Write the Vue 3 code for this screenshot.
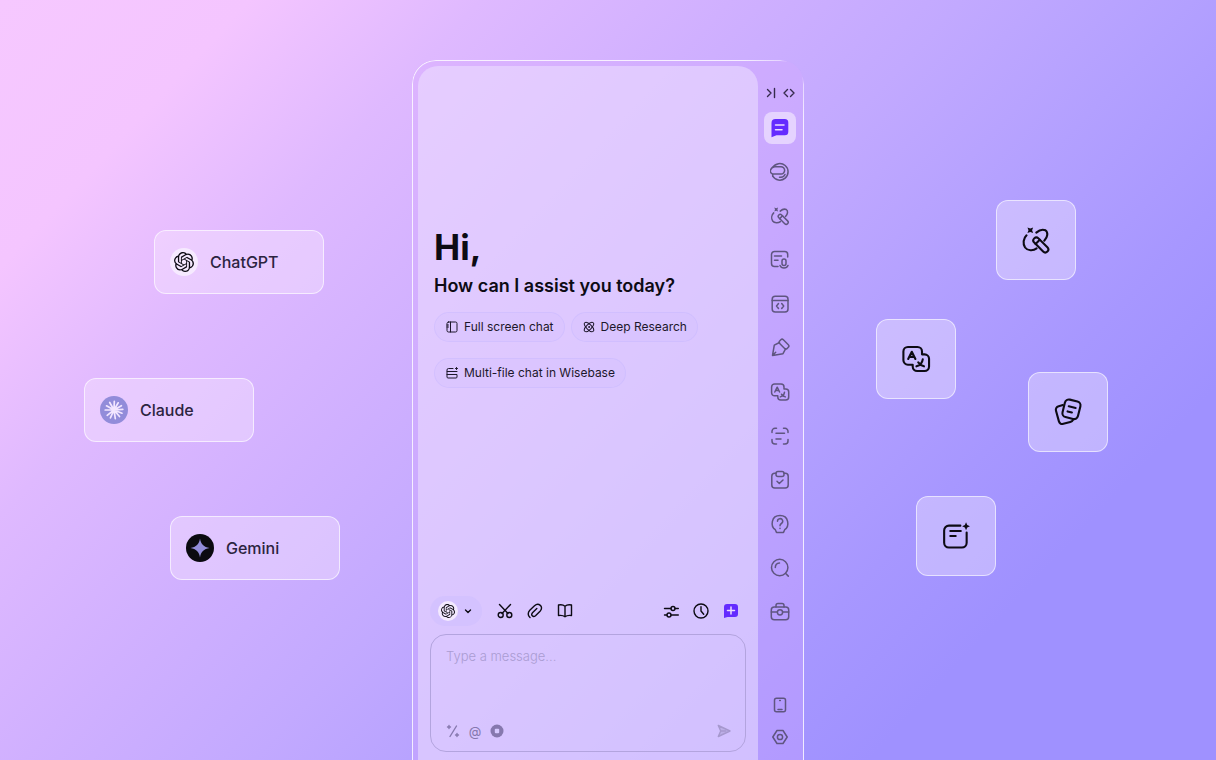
<template>
  <main class="stage">
    <section class="models" aria-label="Models">
      <article v-for="model in models" :key="model.name" class="model" :class="model.id">
        <span class="model-logo">
          <svg :viewBox="model.box" v-html="model.logo"></svg>
        </span>
        <span class="model-name">{{ model.name }}</span>
      </article>
    </section>

    <section class="sidebar">
      <div class="chat">
        <div class="hero">
          <h1>Hi,</h1>
          <h2>How can I assist you today?</h2>
          <div class="prompts">
            <button v-for="prompt in prompts" :key="prompt.text" type="button" class="prompt">
              <svg viewBox="0 0 12 12" v-html="prompt.icon"></svg>
              <span>{{ prompt.text }}</span>
            </button>
          </div>
        </div>

        <div class="toolbar">
          <button type="button" class="model-picker" aria-label="Choose model">
            <span class="picker-logo">
              <svg viewBox="0 0 24 24" v-html="openai"></svg>
            </span>
            <svg class="chevron" viewBox="0 0 8 8"><path d="M1.500 3 4 5.500 6.500 3" /></svg>
          </button>
          <button v-for="tool in leftTools" :key="tool.label" type="button" class="tool" :aria-label="tool.label">
            <svg viewBox="0 0 16 16" v-html="tool.icon"></svg>
          </button>
          <span class="spacer"></span>
          <button v-for="tool in rightTools" :key="tool.label" type="button" class="tool" :aria-label="tool.label">
            <svg viewBox="0 0 16 16" v-html="tool.icon"></svg>
          </button>
        </div>

        <form class="composer" @submit.prevent>
          <textarea v-model="message" aria-label="Message" placeholder="Type a message..."></textarea>
          <div class="composer-row">
            <button type="button" aria-label="Prompts">
              <svg viewBox="0 0 14 14">
                <path d="M10.500 2 4 12.500M3 1.500v3M1.500 3h3M11 9.500v3M9.500 11h3" />
              </svg>
            </button>
            <button type="button" class="mention" aria-label="Mention">@</button>
            <button type="button" aria-label="Record">
              <svg viewBox="0 0 14 14">
                <circle class="solid" cx="7" cy="7" r="6.500" />
                <rect class="hole" x="4.800" y="4.800" width="4.400" height="4.400" rx="1" />
              </svg>
            </button>
            <span class="spacer"></span>
            <button type="submit" aria-label="Send">
              <svg viewBox="0 0 14 14">
                <path class="send" d="M1.300 1.500 13 7 1.300 12.500 3.700 7ZM3.700 7h5" />
              </svg>
            </button>
          </div>
        </form>
      </div>

      <nav class="rail" aria-label="Tools">
        <div class="rail-top">
          <button type="button" aria-label="Collapse">
            <svg viewBox="0 0 12 12"><path d="M2.500 2.500 6 6 2.500 9.500M9.500 1.500v9" /></svg>
          </button>
          <button type="button" aria-label="Resize">
            <svg viewBox="0 0 12 12"><path d="M4.500 2.500 1 6l3.500 3.500M7.500 2.500 11 6 7.500 9.500" /></svg>
          </button>
        </div>
        <div class="rail-list">
          <button
            v-for="item in railItems"
            :key="item"
            type="button"
            class="rail-item"
            :class="{ active: item === active }"
            :aria-label="item"
            @click="active = item"
          >
            <svg viewBox="0 0 20 20" v-html="icons[item]"></svg>
          </button>
        </div>
        <div class="rail-bottom">
          <button v-for="item in ['phone', 'settings']" :key="item" type="button" class="rail-item" :aria-label="item">
            <svg viewBox="0 0 20 20" v-html="icons[item]"></svg>
          </button>
        </div>
      </nav>
    </section>

    <section class="features" aria-label="Features">
      <div v-for="(column, i) in features" :key="i" class="feature-column">
        <article v-for="name in column" :key="name" class="feature" :class="name">
          <svg viewBox="0 0 20 20" v-html="icons[name]"></svg>
        </article>
      </div>
    </section>
  </main>
</template>

<script setup>
import { ref } from "vue";

const message = ref("");
const active = ref("chat");

const openai =
  '<path class="fill" d="M22.2819 9.8211a5.9847 5.9847 0 0 0-.5157-4.9108 6.0462 6.0462 0 0 0-6.5098-2.9A6.0651 6.0651 0 0 0 4.9807 4.1818a5.9847 5.9847 0 0 0-3.9977 2.9 6.0462 6.0462 0 0 0 .7427 7.0966 5.98 5.98 0 0 0 .511 4.9107 6.051 6.051 0 0 0 6.5146 2.9001A5.9847 5.9847 0 0 0 13.2599 24a6.0557 6.0557 0 0 0 5.7718-4.2058 5.9894 5.9894 0 0 0 3.9977-2.9001 6.0557 6.0557 0 0 0-.7475-7.0729zm-9.022 12.6081a4.4755 4.4755 0 0 1-2.8764-1.0408l.1419-.0804 4.7783-2.7582a.7948.7948 0 0 0 .3927-.6813v-6.7369l2.02 1.1686a.071.071 0 0 1 .038.052v5.5826a4.504 4.504 0 0 1-4.4945 4.4944zm-9.6607-4.1254a4.4708 4.4708 0 0 1-.5346-3.0137l.142.0852 4.783 2.7582a.7712.7712 0 0 0 .7806 0l5.8428-3.3685v2.3324a.0804.0804 0 0 1-.0332.0615L9.74 19.9502a4.4992 4.4992 0 0 1-6.1408-1.6464zM2.3408 7.8956a4.485 4.485 0 0 1 2.3655-1.9728V11.6a.7664.7664 0 0 0 .3879.6765l5.8144 3.3543-2.0201 1.1685a.0757.0757 0 0 1-.071 0l-4.8303-2.7865A4.504 4.504 0 0 1 2.3408 7.872zm16.5963 3.8558L13.1038 8.364 15.1192 7.2a.0757.0757 0 0 1 .071 0l4.8303 2.7913a4.4944 4.4944 0 0 1-.6765 8.1042v-5.6772a.79.79 0 0 0-.407-.667zm2.0107-3.0231l-.142-.0852-4.7735-2.7818a.7759.7759 0 0 0-.7854 0L9.409 9.2297V6.8974a.0662.0662 0 0 1 .0284-.0615l4.8303-2.7866a4.4992 4.4992 0 0 1 6.6802 4.66zM8.3065 12.863l-2.02-1.1638a.0804.0804 0 0 1-.038-.0567V6.0742a4.4992 4.4992 0 0 1 7.3757-3.4537l-.142.0805L8.704 5.459a.7948.7948 0 0 0-.3927.6813zm1.0976-2.3654l2.602-1.4998 2.6069 1.4998v2.9994l-2.5974 1.4997-2.6067-1.4997Z"/>';

const models = [
  { id: "chatgpt", name: "ChatGPT", box: "0 0 24 24", logo: openai },
  {
    id: "claude",
    name: "Claude",
    box: "0 0 20 20",
    logo: '<path d="M10 10 10.300 1.300M10 10l4.200-7.200M10 10l7.400-4.300M10 10l8.800-.7M10 10l8 3.200M10 10l5.500 6.500M10 10l1.300 8.600M10 10l-3.600 7.800M10 10l-6.800 5.300M10 10H1.200M10 10 2.500 5.800M10 10 5.700 2.500"/>',
  },
  {
    id: "gemini",
    name: "Gemini",
    box: "0 0 20 20",
    logo: '<path class="fill" d="M10 .5c.8 5.600 3.900 8.700 9.500 9.500-5.600.8-8.700 3.900-9.500 9.500C9.200 13.900 6.100 10.800.5 10 6.100 9.200 9.200 6.100 10 .5Z"/>',
  },
];

const prompts = [
  {
    text: "Full screen chat",
    icon: '<rect x="1" y="1" width="10" height="10" rx="1.500"/><path d="M4.500 1v10M1 4h1.500M1 6h1.500"/>',
  },
  {
    text: "Deep Research",
    icon: '<ellipse cx="6" cy="6" rx="6" ry="2.600" transform="rotate(45 6 6)"/><ellipse cx="6" cy="6" rx="6" ry="2.600" transform="rotate(-45 6 6)"/><circle cx="6" cy="6" r=".5"/>',
  },
  {
    text: "Multi-file chat in Wisebase",
    icon: '<path d="M7 1.500H2.500A1.500 1.500 0 0 0 1 3v1.500h10M10.500.5v2M9.500 1.500h2M1 7.500h10V10a1 1 0 0 1-1 1H2a1 1 0 0 1-1-1V4.500"/>',
  },
];

const leftTools = [
  {
    label: "Screenshot",
    icon: '<path d="M2.500 1.500 11 10.500M13.500 1.500 5 10.500"/><circle cx="3.700" cy="12" r="2.500"/><circle cx="12.300" cy="12" r="2.500"/>',
  },
  {
    label: "Attach",
    icon: '<path d="M3 14.500C.5 12.500.8 9.500 2.800 7.300L7.500 2.800C11.500-.8 17 3.500 13.300 7.900L8.500 12.700C6 14.800 3.500 12 5.500 9.700L9.800 5.500"/>',
  },
  {
    label: "Library",
    icon: '<path d="M8 3.200C6.500 1.900 4 1.500 1.500 2v10.500c2.500-.4 5 0 6.500 1.300 1.500-1.300 4-1.700 6.500-1.300V2C12 1.500 9.500 1.900 8 3.200ZM8 3.200v10.600"/>',
  },
];

const rightTools = [
  {
    label: "Options",
    icon: '<path d="M1.500 5.500h6.500M12 5.500h3.300M1.500 12h2.500M8 12h7.300"/><circle cx="10" cy="5.500" r="2"/><circle cx="6" cy="12" r="2"/>',
  },
  { label: "History", icon: '<circle cx="8" cy="8" r="7"/><path d="M8 3.800V8l2.700 3.200"/>' },
  {
    label: "New chat",
    icon: '<path class="accent" d="M4 1h8a3 3 0 0 1 3 3v7a3 3 0 0 1-3 3H4.500L1 15V4a3 3 0 0 1 3-3Z"/><path class="cut" d="M8 4v7M4.500 7.500h7"/>',
  },
];

const icons = {
  chat: '<path class="accent" d="M5.500 1h9.300A3.500 3.500 0 0 1 18.300 4.500v9.300a3.500 3.500 0 0 1-3.500 3.500H6.500L1.500 19.200V5A4 4 0 0 1 5.500 1Z"/><path class="cut" d="M5.500 7h8.500M5.500 11.800h6.500"/>',
  brain:
    '<path d="M2.700 5.500A8.300 8.300 0 1 1 2.700 14.200"/><path d="M2.700 12A3 3 0 0 1 1 7.200C1.600 5.500 3 4.700 5 4.700h6a3.600 3.600 0 1 1 0 7.300H2.700v2.200"/><path d="M9.500 15.200h1.500a4.500 4.500 0 0 0 4-2.700"/>',
  tools:
    '<path class="fill" d="M4.300 1.600 6.200 2.300 8.100 1.600 7.400 3.500 8.100 5.400 6.200 4.700 4.300 5.400 5 3.500Z"/><path d="M3.700 6.900C1.500 9 1.100 12.500 2.700 15c1.700 2.300 5.500 2.400 7.700.6M10.200 5.100c2-1.800 4.400-2.300 6.100-1.600 1.900 1.400 1.600 4.600-.8 7"/><rect x="7" y="11.300" width="12.400" height="4" rx="2" transform="rotate(45 13.200 13.300)"/><path d="M12.500 9.800 9.700 12.600"/>',
  voice:
    '<path d="M17.700 7V4.500a3 3 0 0 0-3-3H4.500a3 3 0 0 0-3 3v9a3 3 0 0 0 3 3H8M4.500 6h7M4.500 10.200h3.500"/><rect x="12" y="9" width="4" height="6.500" rx="2"/><path d="M10 15.500c1.300 3.300 6.700 3.300 8 0"/>',
  window:
    '<rect x="2.200" y="2.200" width="15.800" height="15.800" rx="3"/><path d="M2.200 6.500H18M8.500 9.500 6.500 12l2 2.500M11.700 9.500l2 2.500-2 2.500"/>',
  pen: '<path d="M9.500 4.500 4.300 7.200 2.500 17.500 13 15.700 15.700 10.700M2.700 17.300l3-3"/><rect x="8.700" y="3.500" width="10.600" height="5.200" rx="1.800" transform="rotate(45 14 6.100)"/>',
  translate:
    '<path d="M4.600 2H11a3 3 0 0 1 3 3v1.900h1.700a3 3 0 0 1 3 3V15a3 3 0 0 1-3 3h-4.900a3 3 0 0 1-3-3v-1.200H4.600a3 3 0 0 1-3-3V5a3 3 0 0 1 3-3Z"/><path d="M4.800 10 7.200 5.200 9.600 10M5.700 8.600h3M14.500 10.200c-.3 2.300-1.700 4-4.200 4.700M11.500 12.200c1 1.300 2 2.200 3.800 2.700"/>',
  scan: '<path d="M2 6.500V5.300a3 3 0 0 1 3-3h1.500M13.500 2.300H15a3 3 0 0 1 3 3v1.200M18 13.500V15a3 3 0 0 1-3 3h-1.500M6.500 18H5a3 3 0 0 1-3-3v-1.500M6 7.300h8.500M6 13h5"/>',
  tasks:
    '<path d="M6 3.300H4.800a3 3 0 0 0-3 3V15a3 3 0 0 0 3 3h10.400a3 3 0 0 0 3-3V6.300a3 3 0 0 0-3-3H14"/><rect x="6" y="1.500" width="8" height="5" rx="2"/><path d="m7 11.300 2.300 2.200 3.700-3.500"/>',
  help: '<path d="M6.500 18.400 5.300 15.700C.3 12.200 1 1.500 10 1.500s9.700 10.700 4.700 14.200l-1.200 2.700Z"/><path d="M7.500 7.300a2.600 2.600 0 1 1 3.900 2.200C10.300 10.200 10 10.700 10 11.800M10 14.300v.3"/>',
  search: '<circle cx="9.700" cy="9.500" r="8.200"/><path d="m15.700 15.500 2.600 2.600M5.300 9.500A4.600 4.600 0 0 1 9.500 5"/>',
  toolbox:
    '<rect x="1.300" y="5" width="17.400" height="12.700" rx="3"/><path d="M6 5V3.500a2 2 0 0 1 2-2h4a2 2 0 0 1 2 2V5M1.300 10h6M12.700 10h6"/><circle cx="10" cy="10.300" r="2.600"/>',
  phone: '<rect x="4.500" y="3.300" width="11" height="13.400" rx="2"/><path d="M8 14.500h4M9.700 5.500h.6"/>',
  settings: '<path d="M7 3.500h6L17.200 10 13 16.500H7L2.800 10Z"/><circle cx="10" cy="10" r="2.600"/>',
  cards:
    '<rect x="7" y="2.200" width="10.600" height="12" rx="2.700" transform="rotate(14 12.300 8.200)"/><path d="M6.600 5.400 3.800 6.200c-1.500.4-2.200 1.500-1.800 3l1.900 6.900c.4 1.500 1.500 2.200 3 1.800l4.600-1.300c1.200-.3 1.700-.8 2.100-1.700M10.500 6.200l4.600 1.100M9.700 9.600l2.900.7"/>',
  note: '<path d="M12.900 3.100H5.300a3.200 3.200 0 0 0-3.200 3.200v8.200a3.200 3.200 0 0 0 3.200 3.200h8.600a3.200 3.200 0 0 0 3.200-3.200V7.700M6.200 6.700h7M6.200 10h3.600"/><path class="fill" d="m16.700.9.800 1.800 1.800.8-1.800.8-.8 1.800-.8-1.800-1.800-.8 1.800-.8Z"/>',
};

const railItems = [
  "chat",
  "brain",
  "tools",
  "voice",
  "window",
  "pen",
  "translate",
  "scan",
  "tasks",
  "help",
  "search",
  "toolbox",
];

const features = [
  ["translate", "note"],
  ["tools", "cards"],
];
</script>

<style>
body {
  margin: 0;
}
</style>

<style scoped>
.stage {
  display: grid;
  grid-template-columns: 1fr 392px 1fr;
  min-height: 100vh;
  overflow: hidden;
  background: linear-gradient(133deg, #f6c8ff 0%, #f4c5ff 13%, #dfb9ff 25%, #d0b0ff 38%, #c2a9ff 50%, #b3a0ff 62%, #a797ff 73%, #9f91ff 82%, #9f91ff 100%);
  font-family: "Inter", "Open Sans", sans-serif;
  color: #0d0b14;
}

button {
  display: flex;
  align-items: center;
  justify-content: center;
  margin: 0;
  padding: 0;
  border: 0;
  background: none;
  color: inherit;
  font: inherit;
  cursor: pointer;
}

svg {
  display: block;
  flex: none;
  fill: none;
  stroke: currentColor;
  stroke-width: 1.4;
  stroke-linecap: round;
  stroke-linejoin: round;
}

svg :deep(.fill) {
  fill: currentColor;
  stroke: none;
}

svg :deep(.accent) {
  fill: #642bff;
  stroke: none;
}

svg :deep(.cut) {
  stroke: #eadcff;
  stroke-width: 1.5;
}

.spacer {
  flex: 1;
}

/* model cards */
.models {
  display: flex;
  flex-direction: column;
  align-items: flex-end;
  padding-top: 230px;
}

.model {
  display: flex;
  align-items: center;
  gap: 12px;
  box-sizing: border-box;
  width: 170px;
  height: 64px;
  padding: 0 15px;
  border: 1px solid rgba(255, 255, 255, 0.65);
  border-radius: 12px;
  background: rgba(250, 235, 255, 0.38);
}

.chatgpt {
  margin: 0 88px 84px 0;
}

.claude {
  margin: 0 158px 74px 0;
}

.gemini {
  margin-right: 72px;
}

.model-logo {
  display: flex;
  align-items: center;
  justify-content: center;
  width: 28px;
  height: 28px;
  border-radius: 50%;
  background: #f6eaff;
}

.model-logo svg {
  width: 20px;
  height: 20px;
}

.claude .model-logo {
  background: #928cda;
  color: #f3e6ff;
}

.claude .model-logo svg {
  stroke-width: 1.7;
}

.gemini .model-logo {
  background: #0b0a10;
  color: #928cda;
}

.model-name {
  font-size: 16px;
  font-weight: 500;
  line-height: 24px;
  color: #2c2440;
}

/* side panel */
.sidebar {
  position: relative;
  display: flex;
  margin-top: 60px;
  padding: 6px 0 0 6px;
  border-radius: 24px 24px 0 0;
  background: rgba(215, 170, 255, 0.3);
}

.sidebar::before {
  content: "";
  position: absolute;
  inset: 0;
  padding: 1px 1px 0;
  border-radius: 24px 24px 0 0;
  background: radial-gradient(circle at 100% 0, transparent 16px, rgba(255, 255, 255, 0.5) 24px, rgba(255, 255, 255, 0.8) 60px);
  mask: linear-gradient(#000 0 0) content-box exclude, linear-gradient(#000 0 0);
  pointer-events: none;
}

.chat {
  display: flex;
  flex: 1;
  flex-direction: column;
  padding: 0 12px 8px;
  border-radius: 20px 20px 0 0;
  background: rgba(240, 230, 255, 0.5);
}

.hero {
  flex: 1;
  padding: 160px 4px 16px;
}

h1 {
  margin: 0;
  font-size: 35px;
  font-weight: 700;
  line-height: 43px;
}

h2 {
  margin: 5px 0 0;
  font-size: 18px;
  font-weight: 600;
  line-height: 24px;
}

.prompts {
  display: flex;
  flex-wrap: wrap;
  gap: 16px 6px;
  margin-top: 14px;
}

.prompt {
  gap: 6px;
  height: 30px;
  padding: 0 10px 0 11px;
  border: 1px solid rgba(190, 175, 255, 0.3);
  border-radius: 15px;
  background: rgba(195, 180, 255, 0.12);
  box-sizing: border-box;
  font-size: 12px;
  line-height: 16px;
  color: #1d172b;
}

.prompt svg {
  width: 12px;
  height: 12px;
  stroke-width: 1;
}

.toolbar {
  display: flex;
  align-items: center;
  gap: 14px;
  height: 30px;
  padding-right: 7px;
  margin-bottom: 8px;
}

.model-picker {
  gap: 6px;
  width: 52px;
  height: 30px;
  margin-right: 1px;
  padding-right: 2px;
  box-sizing: border-box;
  border-radius: 15px;
  background: rgba(200, 185, 255, 0.35);
}

.picker-logo {
  display: flex;
  align-items: center;
  justify-content: center;
  width: 20px;
  height: 20px;
  border-radius: 50%;
  background: #f3e9ff;
}

.picker-logo svg {
  width: 14px;
  height: 14px;
}

.chevron {
  width: 8px;
  height: 8px;
}

.tool svg {
  width: 16px;
  height: 16px;
}

.composer {
  display: flex;
  flex-direction: column;
  height: 118px;
  box-sizing: border-box;
  padding: 11px 14px 12px 15px;
  border: 1px solid #b3a4de;
  border-radius: 16px;
}

.composer textarea {
  flex: 1;
  min-height: 0;
  padding: 0;
  border: 0;
  outline: 0;
  resize: none;
  background: none;
  color: inherit;
  font-family: inherit;
  font-size: 13px;
  font-weight: 300;
  line-height: 20px;
}

.composer textarea::placeholder {
  color: #aa9cd2;
  opacity: 1;
}

.composer-row {
  display: flex;
  align-items: center;
  gap: 8px;
  height: 16px;
  color: #8678ae;
}

.composer-row svg {
  width: 14px;
  height: 14px;
}

.mention {
  width: 14px;
  font-size: 13px;
  line-height: 16px;
}

.solid {
  fill: currentColor;
  stroke: none;
}

.hole {
  fill: #d6c9ff;
  stroke: none;
}

.send {
  fill: #bcaee6;
  stroke: #a698ce;
}

/* icon rail */
.rail {
  display: flex;
  flex-direction: column;
  align-items: center;
  width: 44px;
  padding: 20px 2px 7px 0;
  color: #5f5580;
}

.rail-top {
  display: flex;
  gap: 6px;
  height: 14px;
  margin-bottom: 12px;
  color: #352b4c;
}

.rail-top svg {
  width: 12px;
  height: 12px;
}

.rail-list {
  display: flex;
  flex-direction: column;
  gap: 12px;
  margin-bottom: auto;
}

.rail-item {
  width: 32px;
  height: 32px;
  border-radius: 8px;
}

.rail-item.active {
  background: #e5d3ff;
}

.rail-item svg {
  width: 20px;
  height: 20px;
  stroke-width: 1.5;
}

/* feature tiles */
.features {
  display: flex;
  gap: 40px;
  padding-left: 72px;
}

.feature-column {
  display: flex;
  flex-direction: column;
  width: 80px;
}

.feature-column + .feature-column {
  padding-top: 200px;
}

.feature-column:first-child {
  padding-top: 319px;
}

.feature {
  display: flex;
  align-items: center;
  justify-content: center;
  box-sizing: border-box;
  width: 80px;
  height: 80px;
  border: 1px solid rgba(255, 255, 255, 0.6);
  border-radius: 12px;
  background: rgba(240, 230, 255, 0.4);
}

.feature svg {
  width: 30px;
  height: 30px;
}

.feature.note {
  margin: 97px 0 0 40px;
}

.feature.cards {
  margin: 92px 0 0 32px;
}
</style>
